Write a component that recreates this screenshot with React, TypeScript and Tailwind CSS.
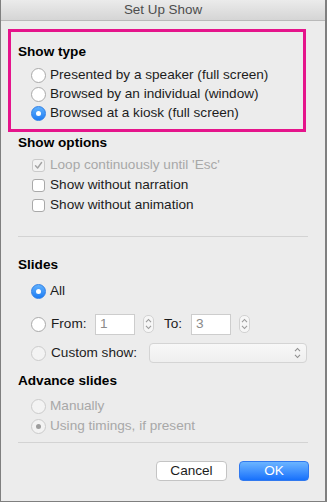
import React from "react";

function Radio({ checked = false, disabled = false }: { checked?: boolean; disabled?: boolean }) {
  if (checked && !disabled) {
    return (
      <div className="w-[15px] h-[15px] rounded-full bg-linear-to-b from-[#5fb0fd] to-[#1b7cf3] border border-[#2f7fe6] flex items-center justify-center shrink-0">
        <div className="w-[5px] h-[5px] rounded-full bg-white" />
      </div>
    );
  }
  if (disabled) {
    return (
      <div className="w-[15px] h-[15px] rounded-full bg-[#f3f3f3] border border-[#cbcbcb] flex items-center justify-center shrink-0">
        {checked && <div className="w-[5px] h-[5px] rounded-full bg-[#9d9d9d]" />}
      </div>
    );
  }
  return <div className="w-[15px] h-[15px] rounded-full bg-white border border-[#a9a9a9] shrink-0" />;
}

function Checkbox({ checked = false, disabled = false }: { checked?: boolean; disabled?: boolean }) {
  return (
    <div
      className={
        disabled
          ? "w-[13px] h-[13px] rounded-[3px] bg-[#f2f2f2] border border-[#cacaca] flex items-center justify-center shrink-0"
          : "w-[13px] h-[13px] rounded-[3px] bg-white border border-[#a9a9a9] shrink-0"
      }
    >
      {checked && (
        <svg width="9" height="9" viewBox="0 0 9 9">
          <path d="M1.5 4.8 L3.6 7 L7.6 1.5" fill="none" stroke="#a3a3a3" strokeWidth="1.4" strokeLinecap="round" strokeLinejoin="round" />
        </svg>
      )}
    </div>
  );
}

function UpDown({ color = "#8a8a8a" }: { color?: string }) {
  return (
    <svg width="7" height="12" viewBox="0 0 7 12">
      <path d="M1 4.2 L3.5 1.5 L6 4.2" fill="none" stroke={color} strokeWidth="1.1" />
      <path d="M1 7.8 L3.5 10.5 L6 7.8" fill="none" stroke={color} strokeWidth="1.1" />
    </svg>
  );
}

function Stepper() {
  return (
    <div className="w-[11px] h-[18px] rounded-[5px] border border-[#d2d2d2] bg-[#f6f6f6] flex items-center justify-center shrink-0">
      <UpDown color="#9a9a9a" />
    </div>
  );
}

export default function App() {
  return (
    <div className="w-[327px] h-[502px] bg-[#ececec] border-l border-r-2 border-b border-[#7f7f7f] flex flex-col font-['Liberation_Sans',Arial,sans-serif] text-[13.6px] text-[#1c1c1c] overflow-hidden">
      <div className="h-[21px] shrink-0 bg-linear-to-b from-[#ebebeb] to-[#d5d5d5] border-b border-[#b9b9b9] flex items-center justify-center text-[#4d4d4d] text-[13.4px] leading-[16px]">
        Set Up Show
      </div>

      <div className="ml-[7px] mt-[8px] w-[298px] h-[103px] border-[3px] border-[#e5148b] pt-[12px] pl-[7px] shrink-0">
        <div className="font-bold text-black leading-[16px]">Show type</div>
        <div className="mt-[6px] ml-[13px] flex flex-col">
          <div className="h-[19px] flex items-center gap-[4px]">
            <Radio />
            <span>Presented by a speaker (full screen)</span>
          </div>
          <div className="h-[19px] flex items-center gap-[4px]">
            <Radio />
            <span>Browsed by an individual (window)</span>
          </div>
          <div className="h-[19px] flex items-center gap-[4px]">
            <Radio checked />
            <span>Browsed at a kiosk (full screen)</span>
          </div>
        </div>
      </div>

      <div className="pl-[17px] flex flex-col">
        <div className="mt-[3px] font-bold text-black leading-[16px]">Show options</div>
        <div className="mt-[4px] ml-[14px] flex flex-col">
          <div className="h-[20px] flex items-center gap-[5px]">
            <Checkbox checked disabled />
            <span className="text-[#a8a8a8]">Loop continuously until 'Esc'</span>
          </div>
          <div className="h-[20px] flex items-center gap-[5px]">
            <Checkbox />
            <span>Show without narration</span>
          </div>
          <div className="h-[20px] flex items-center gap-[5px]">
            <Checkbox />
            <span>Show without animation</span>
          </div>
        </div>

        <div className="mt-[21px] w-[290px] h-px bg-[#d3d3d3]" />

        <div className="mt-[20px] font-bold text-black leading-[16px]">Slides</div>
        <div className="mt-[8px] ml-[13px] h-[20px] flex items-center gap-[4px]">
          <Radio checked />
          <span>All</span>
        </div>
        <div className="mt-[11px] ml-[13px] h-[24px] flex items-center">
          <Radio />
          <span className="ml-[5px] w-[44px]">From:</span>
          <div className="w-[40px] h-[21px] bg-white border border-[#cdcdcd] flex items-center pl-[4px] text-[#8a8a8a] shrink-0">1</div>
          <div className="ml-[8px]">
            <Stepper />
          </div>
          <span className="ml-[10px] w-[27px]">To:</span>
          <div className="w-[40px] h-[21px] bg-white border border-[#cdcdcd] flex items-center pl-[4px] text-[#8a8a8a] shrink-0">3</div>
          <div className="ml-[8px]">
            <Stepper />
          </div>
        </div>
        <div className="mt-[6px] ml-[13px] h-[22px] flex items-center">
          <Radio disabled />
          <span className="ml-[5px] w-[98px]">Custom show:</span>
          <div className="w-[158px] h-[20px] rounded-[4px] border border-[#d4d4d4] bg-linear-to-b from-[#f8f8f8] to-[#efefef] flex items-center justify-end pr-[5px] shrink-0">
            <UpDown color="#8f8f8f" />
          </div>
        </div>

        <div className="mt-[9px] font-bold text-black leading-[16px]">Advance slides</div>
        <div className="mt-[7px] ml-[13px] flex flex-col">
          <div className="h-[20px] flex items-center gap-[4px]">
            <Radio disabled />
            <span className="text-[#a8a8a8]">Manually</span>
          </div>
          <div className="h-[20px] flex items-center gap-[4px]">
            <Radio disabled checked />
            <span className="text-[#a8a8a8]">Using timings, if present</span>
          </div>
        </div>

        <div className="mt-[6px] w-[290px] h-px bg-[#d3d3d3]" />
      </div>

      <div className="mt-[18px] flex justify-end gap-[12px] pr-[16px]">
        <button className="w-[71px] h-[20px] rounded-[4px] bg-white border border-[#c4c4c4] text-[13.6px] leading-none text-[#1c1c1c] flex items-center justify-center">
          Cancel
        </button>
        <button className="w-[70px] h-[20px] rounded-[4px] bg-linear-to-b from-[#6bb4ff] to-[#1670fb] border border-[#3079ef] text-[13.6px] leading-none text-white flex items-center justify-center">
          OK
        </button>
      </div>
    </div>
  );
}
